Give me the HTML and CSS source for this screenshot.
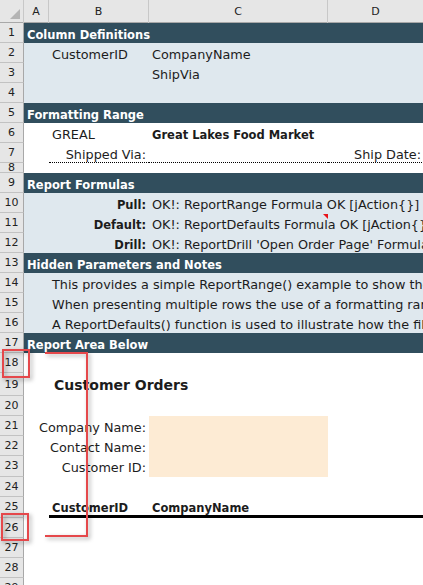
FILE: index.html
```html
<!DOCTYPE html>
<html>
<head>
<meta charset="utf-8">
<link rel="stylesheet" href="styles.css">
</head>
<body>
<div class="sheet">
  <div class="hdr">
    <div class="corner"><svg width="24" height="22" viewBox="0 0 24 22"><polygon points="20,9 20,19 10,19" fill="#b4b4b4"/></svg></div>
    <div class="ch">A</div><div class="ch">B</div><div class="ch">C</div><div class="ch">D</div>
  </div>

  <div class="row band"><div class="rh">1</div><div class="t span-a">Column Definitions</div></div>
  <div class="row blue"><div class="rh">2</div><div class="t colb">CustomerID</div><div class="t colc">CompanyName</div></div>
  <div class="row blue"><div class="rh">3</div><div class="t colc">ShipVia</div></div>
  <div class="row blue"><div class="rh">4</div></div>
  <div class="row band"><div class="rh">5</div><div class="t span-a">Formatting Range</div></div>
  <div class="row"><div class="rh">6</div><div class="t colb">GREAL</div><div class="t colc b">Great Lakes Food Market</div></div>
  <div class="row"><div class="rh">7</div><div class="t colb right dotted">Shipped Via:</div><div class="t colc dotted"></div><div class="t cold right dotted">Ship Date:</div></div>
  <div class="row short"><div class="rh">8</div></div>
  <div class="row band"><div class="rh">9</div><div class="t span-a">Report Formulas</div></div>
  <div class="row blue"><div class="rh">10</div><div class="t colb right b">Pull:</div><div class="t span-c">OK!: ReportRange Formula OK [jAction{}]</div></div>
  <div class="row blue"><div class="rh">11</div><div class="t colb right b">Default:</div><div class="t span-c">OK!: ReportDefaults Formula OK [jAction{}]<span class="note"></span></div></div>
  <div class="row blue"><div class="rh">12</div><div class="t colb right b">Drill:</div><div class="t span-c">OK!: ReportDrill 'Open Order Page' Formula</div></div>
  <div class="row band"><div class="rh">13</div><div class="t span-a">Hidden Parameters and Notes</div></div>
  <div class="row blue"><div class="rh">14</div><div class="t span-b">This provides a simple ReportRange() example to show the</div></div>
  <div class="row blue"><div class="rh">15</div><div class="t span-b">When presenting multiple rows the use of a formatting range</div></div>
  <div class="row blue"><div class="rh">16</div><div class="t span-b">A ReportDefaults() function is used to illustrate how the filters</div></div>
  <div class="row band"><div class="rh">17</div><div class="t span-a">Report Area Below</div></div>
  <div class="row"><div class="rh">18</div></div>
  <div class="row tall"><div class="rh">19</div><div class="t span-b title">Customer Orders</div></div>
  <div class="row"><div class="rh">20</div></div>
  <div class="row"><div class="rh">21</div><div class="t span-ab right">Company Name:</div><div class="peach"></div></div>
  <div class="row"><div class="rh">22</div><div class="t span-ab right">Contact Name:</div><div class="peach"></div></div>
  <div class="row r21"><div class="rh">23</div><div class="t span-ab right">Customer ID:</div><div class="peach"></div></div>
  <div class="row"><div class="rh">24</div></div>
  <div class="row r21"><div class="rh">25</div><div class="t colb b thick">CustomerID</div><div class="t colc b thick">CompanyName</div><div class="t cold thick"></div></div>
  <div class="row"><div class="rh">26</div></div>
  <div class="row"><div class="rh">27</div></div>
  <div class="row"><div class="rh">28</div></div>
  <div class="row"><div class="rh">29</div></div>

  <div class="mark mark18"></div>
  <div class="mark mark26"></div>
  <div class="bracket"></div>
</div>
</body>
</html>
```

FILE: styles.css
```css
html, body {
  margin: 0;
  padding: 0;
  background: #fff;
}
body {
  width: 423px;
  height: 585px;
  overflow: hidden;
  font-family: "DejaVu Sans", sans-serif;
  color: #1c1c1c;
}
.sheet {
  position: relative;
  width: 423px;
}
.hdr {
  display: grid;
  grid-template-columns: 24px 25px 100px 179px 96px;
  height: 23px;
  background: #e6e6e6;
  border-bottom: 1px solid #a8a8a8;
  box-sizing: border-box;
}
.corner {
  border-right: 1px solid #c8c8c8;
}
.corner svg { display: block; }
.ch {
  font-size: 11px;
  line-height: 23px;
  text-align: center;
  color: #222;
  border-right: 1px solid #c8c8c8;
}
.row {
  display: grid;
  grid-template-columns: 24px 25px 100px 179px 96px;
  grid-template-rows: 100%;
  height: 20px;
}
.row.short { height: 10px; }
.row.tall { height: 23px; }
.row.r21 { height: 21px; }
.rh {
  grid-column: 1;
  grid-row: 1;
  background: #e6e6e6;
  border-bottom: 1px solid #c2c2c2;
  border-right: 1px solid #a8a8a8;
  box-sizing: border-box;
  font-size: 11px;
  line-height: 20px;
  text-align: center;
  color: #222;
  overflow: hidden;
}
.short .rh { line-height: 10px; }
.tall .rh { line-height: 23px; }
.band {
  background: #314e5d;
}
.band .t {
  color: #fff;
  font-weight: bold;
  font-size: 11.5px;
}
.blue {
  background: #dfe8ee;
}
.t {
  grid-row: 1;
  white-space: nowrap;
  font-size: 12.8px;
  line-height: 24px;
  padding: 0 3px;
  box-sizing: border-box;
  min-width: 0;
  position: relative;
}
.b {
  font-weight: bold;
  font-size: 11.5px;
}
.right { text-align: right; }
.span-a { grid-column: 2 / -1; }
.span-b { grid-column: 3 / -1; }
.span-c { grid-column: 4 / -1; }
.span-ab { grid-column: 2 / 4; }
.colb { grid-column: 3; }
.colc { grid-column: 4; }
.cold { grid-column: 5; }
.dotted { border-bottom: 1px dotted #000; }
.thick { border-bottom: 3px solid #000; line-height: 22px; }
.title {
  font-weight: bold;
  font-size: 14px;
  line-height: 25px;
  padding-left: 5px;
}
.peach {
  grid-column: 4;
  grid-row: 1;
  background: #fdebd4;
}
.note {
  position: absolute;
  left: 174px;
  top: 1px;
  width: 0;
  height: 0;
  border-top: 5px solid #e8141a;
  border-left: 5px solid transparent;
}
.mark {
  position: absolute;
  border: 2px solid #e5484b;
  box-sizing: border-box;
  filter: drop-shadow(2px 2px 2px rgba(0,0,0,0.35));
}
.mark18 { left: 2px; top: 349px; width: 28px; height: 29px; }
.mark26 { left: 1px; top: 513px; width: 28px; height: 28px; }
.bracket {
  position: absolute;
  left: 45px;
  top: 352px;
  width: 43px;
  height: 185px;
  border: 2px solid #e5484b;
  border-left: none;
  box-sizing: border-box;
  filter: drop-shadow(2px 2px 2px rgba(0,0,0,0.35));
}
```
